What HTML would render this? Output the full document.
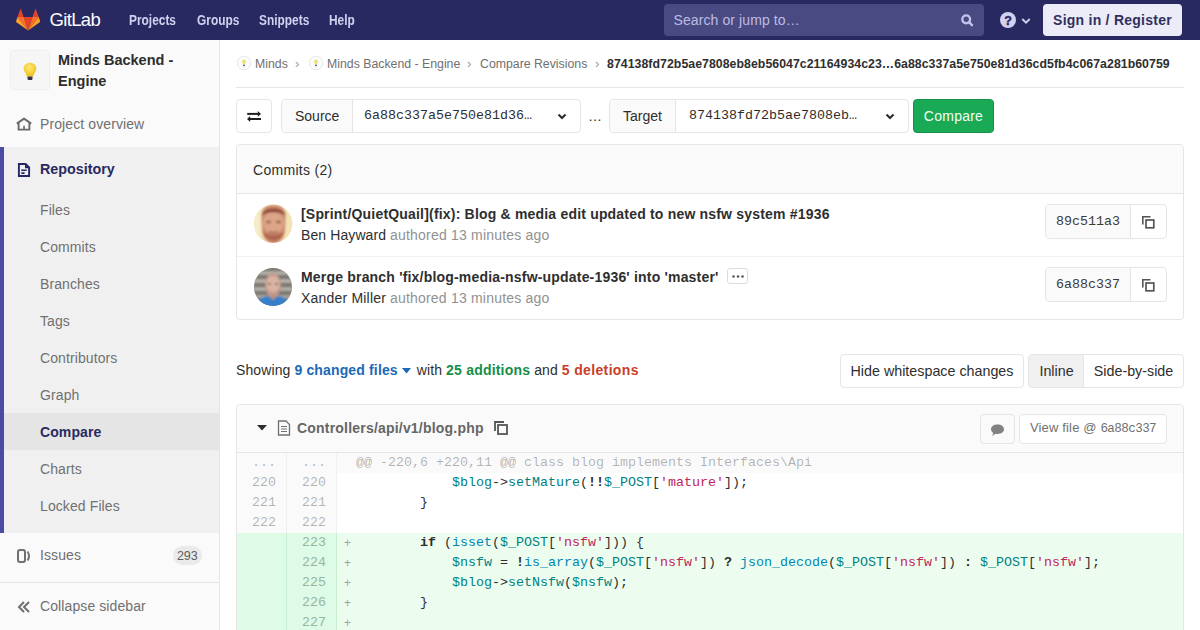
<!DOCTYPE html>
<html><head><meta charset="utf-8">
<style>
*{box-sizing:border-box;margin:0;padding:0}
html,body{width:1200px;height:630px;overflow:hidden;background:#fff}
body{font-family:"Liberation Sans",sans-serif;font-size:14px;color:#2e2e2e;position:relative}
.abs{position:absolute}
.mono{font-family:"Liberation Mono",monospace}
/* header */
#hdr{position:absolute;left:0;top:0;width:1200px;height:40px;background:#292961}
#hdr .nav{position:absolute;top:0;height:40px;line-height:40px;color:#d1d1f0;font-weight:700;font-size:14px;transform:scaleX(0.85);transform-origin:0 0}
#search{position:absolute;left:664px;top:4px;width:320px;height:32px;border-radius:4px;background:#4a4a82}
#search span{position:absolute;left:9.5px;letter-spacing:0.1px;top:0;line-height:32px;color:#bcbce4;font-size:14px}
#signin{position:absolute;left:1043px;top:4px;width:139px;height:32px;border-radius:4px;background:#ececf8;color:#30305f;font-weight:700;font-size:14px;line-height:32px;text-align:center;letter-spacing:0.25px}
/* sidebar */
#side{position:absolute;left:0;top:40px;width:220px;height:590px;background:#fafafa;border-right:1px solid #e5e5e5}
#side .it{position:absolute;left:40px;color:#707070;font-size:14px;line-height:20px;letter-spacing:0.1px}
#repo{position:absolute;left:0;top:107px;width:219px;height:386px;background:#f0f0f0}
#repo .bar{position:absolute;left:0;top:0;width:4px;height:386px;background:#4b4ba3}
#cmpact{position:absolute;left:4px;top:266px;width:215px;height:37px;background:#e5e5e5}
/* content */
.crumb{position:absolute;top:55px;line-height:18px;font-size:12.3px;color:#707070}
.btn{position:absolute;border:1px solid #e5e5e5;border-radius:4px;background:#fff}

.dl{position:absolute;left:0;width:946px;height:20px;white-space:pre;background:#fff}
.dl .n1,.dl .n2{position:absolute;top:0;width:50px;height:20px;text-align:right;padding-right:10px;color:rgba(0,0,0,0.3);background:#fafafa;border-right:1px solid #f0f0f0}
.dl .n1{left:0}.dl .n2{left:50px}
.dl .lc{position:absolute;left:107px;top:-0.5px;color:#a0a0a0;font-family:"Liberation Sans",sans-serif;font-size:12px}
.dl .code{position:absolute;left:119px;top:0;color:#2e2e2e}
.dl.match .code{color:rgba(0,0,0,0.3)}
.dl.match{background:#fafafa}
.dl.new{background:#ecfdf0}
.dl.new .n1,.dl.new .n2{background:#ddfbe6;border-right-color:#c7f0d2;color:#98b5a0}
.dl.match .n1,.dl.match .n2{letter-spacing:0}
.nv,.na{color:#008080}.nb{color:#0086b3}.s{color:#c0245a}.k{font-weight:700;color:#2e2e2e}.o{color:#2e2e2e}.ob{font-weight:700;color:#2e2e2e}.p{color:#2e2e2e}
</style></head><body>

<div id="hdr">
  <svg class="abs" style="left:15.8px;top:8.5px" width="24.2" height="23" viewBox="0 0 25 24" preserveAspectRatio="none">
    <path d="M12.5 22.5 L17.1 8.4 H7.9 Z" fill="#e24329"/>
    <path d="M12.5 22.5 L7.9 8.4 H1.5 Z" fill="#fc6d26"/>
    <path d="M1.5 8.4 L0.1 12.7 C0 13.1 0.1 13.5 0.5 13.8 L12.5 22.5 Z" fill="#fca326"/>
    <path d="M1.5 8.4 H7.9 L5.1 0.3 C5 0 4.6 0 4.5 0.3 Z" fill="#e24329"/>
    <path d="M12.5 22.5 L17.1 8.4 H23.5 Z" fill="#fc6d26"/>
    <path d="M23.5 8.4 L24.9 12.7 C25 13.1 24.9 13.5 24.5 13.8 L12.5 22.5 Z" fill="#fca326"/>
    <path d="M23.5 8.4 H17.1 L19.9 0.3 C20 0 20.4 0 20.5 0.3 Z" fill="#e24329"/>
  </svg>
  <div class="abs" style="left:49.5px;top:-0.5px;line-height:40px;color:#fafaff;font-size:18.5px;letter-spacing:-0.65px">GitLab</div>
  <div class="nav" style="left:129px">Projects</div>
  <div class="nav" style="left:197px">Groups</div>
  <div class="nav" style="left:259px">Snippets</div>
  <div class="nav" style="left:329px">Help</div>
  <div id="search"><span>Search or jump to…</span>
    <svg class="abs" style="left:296px;top:9px" width="14" height="14" viewBox="0 0 14 14"><circle cx="6.2" cy="6.3" r="3.9" fill="none" stroke="#c4c4ea" stroke-width="2.4"/><path d="M9 9.2 L12 12.2" stroke="#c4c4ea" stroke-width="2.4" stroke-linecap="round"/></svg>
  </div>
  <svg class="abs" style="left:1000px;top:12px" width="16" height="16" viewBox="0 0 16 16"><circle cx="8" cy="8" r="8" fill="#d1d1f0"/><text x="8" y="12.8" text-anchor="middle" font-family="Liberation Sans" font-weight="700" font-size="12.5" fill="#292961" stroke="#292961" stroke-width="0.4">?</text></svg>
  <svg class="abs" style="left:1020.5px;top:16.5px" width="10" height="8" viewBox="0 0 10 8"><path d="M1.3 2 L5 5.7 L8.7 2" fill="none" stroke="#d1d1f0" stroke-width="1.9"/></svg>
  <div id="signin">Sign in / Register</div>
</div>

<div id="side">
  <div class="abs" style="left:10px;top:10px;width:40px;height:40px;border-radius:4px;background:#f6f6f6;box-shadow:inset 0 0 0 1px rgba(0,0,0,0.03)"></div>
  <svg class="abs" style="left:22px;top:22px" width="16" height="20" viewBox="0 0 16 20"><defs><radialGradient id="bg1" cx="45%" cy="35%" r="60%"><stop offset="0" stop-color="#ffe97a"/><stop offset="1" stop-color="#f0c420"/></radialGradient></defs><path d="M8 0.8 C4.6 0.8 1.6 3 1.6 6.6 C1.6 9.4 4 11 4.8 14.5 H11.2 C12 11 14.4 9.4 14.4 6.6 C14.4 3 11.4 0.8 8 0.8 Z" fill="url(#bg1)"/><path d="M5.5 14.5 H10.5 V16.8 C10.5 17.6 9.8 18 9 18 H7 C6.2 18 5.5 17.6 5.5 16.8Z" fill="#33334a"/></svg>
  <div class="abs" style="left:58px;top:10px;width:150px;font-weight:700;font-size:14.5px;line-height:21px;color:#2e2e2e">Minds Backend - Engine</div>
  <svg class="abs" style="left:16px;top:76px" width="16" height="16" viewBox="0 0 16 16"><path d="M0.8 7.6 L8 2.6 L15.2 7.6" fill="none" stroke="#6a6a6a" stroke-width="1.9" stroke-linejoin="round"/><path d="M2.6 6.6 V13.6 H13.4 V6.6" fill="none" stroke="#6a6a6a" stroke-width="1.9"/><rect x="7.2" y="9.8" width="1.7" height="4" fill="#6a6a6a"/></svg>
  <div class="it" style="top:74px">Project overview</div>
  <div id="repo"><div class="bar"></div><div id="cmpact"></div>
    <svg class="abs" style="left:17px;top:16px" width="14" height="15" viewBox="0 0 14 15"><path d="M1.9 1 H8.6 L12.1 4.5 V13 H1.9 Z" fill="none" stroke="#25256a" stroke-width="1.9" stroke-linejoin="miter"/><path d="M8 1 V5.3 H12.1 Z" fill="#25256a"/><path d="M4.3 7.2 H9.7 M4.3 10.1 H7.6" stroke="#25256a" stroke-width="1.6"/></svg>
    <div class="abs" style="left:40px;top:12px;line-height:20px;font-weight:700;font-size:14.3px;color:#292961">Repository</div>
    <div class="it" style="top:53px">Files</div>
    <div class="it" style="top:90px">Commits</div>
    <div class="it" style="top:127px">Branches</div>
    <div class="it" style="top:164px">Tags</div>
    <div class="it" style="top:201px">Contributors</div>
    <div class="it" style="top:238px">Graph</div>
    <div class="it" style="top:275px;color:#292961;font-weight:700">Compare</div>
    <div class="it" style="top:312px">Charts</div>
    <div class="it" style="top:349px">Locked Files</div>
  </div>
  <svg class="abs" style="left:17px;top:509px" width="14" height="14" viewBox="0 0 14 14"><rect x="1" y="1" width="7" height="12" rx="2" fill="none" stroke="#707070" stroke-width="2"/><path d="M10.5 2.5 C12.5 5 12.5 9 10.5 11.5" fill="none" stroke="#707070" stroke-width="2"/></svg>
  <div class="it" style="top:505px">Issues</div>
  <div class="abs" style="left:172.5px;top:505.5px;width:29.5px;height:19.5px;border-radius:10px;background:#eaeaea;color:#5e5e5e;font-size:12.5px;line-height:21px;text-align:center;letter-spacing:-0.1px">293</div>
  <div class="abs" style="left:0;top:542px;width:219px;height:1px;background:#e5e5e5"></div>
  <svg class="abs" style="left:17px;top:561px" width="14" height="12" viewBox="0 0 14 12"><path d="M7 1 L2 6 L7 11 M12 1 L7 6 L12 11" fill="none" stroke="#707070" stroke-width="2"/></svg>
  <div class="it" style="top:556px">Collapse sidebar</div>
</div>

<!-- breadcrumbs -->
<svg class="abs" style="left:235.5px;top:55px" width="16" height="16" viewBox="0 0 16 16"><circle cx="8" cy="8" r="6.8" fill="#fbfbfb" stroke="#e8e8e8" stroke-width="1"/><path d="M8 4.6 C6.8 4.6 6 5.5 6 6.6 C6 7.7 6.9 8.2 7 9.4 H9 C9.1 8.2 10 7.7 10 6.6 C10 5.5 9.2 4.6 8 4.6 Z" fill="#efe07a"/><rect x="7.1" y="9.6" width="1.8" height="1.6" fill="#666"/></svg>
<div class="crumb" style="left:255px">Minds</div>
<div class="crumb" style="left:295px;font-size:13px;color:#999">›</div>
<svg class="abs" style="left:307.5px;top:55px" width="16" height="16" viewBox="0 0 16 16"><circle cx="8" cy="8" r="6.8" fill="#fbfbfb" stroke="#e8e8e8" stroke-width="1"/><path d="M8 4.6 C6.8 4.6 6 5.5 6 6.6 C6 7.7 6.9 8.2 7 9.4 H9 C9.1 8.2 10 7.7 10 6.6 C10 5.5 9.2 4.6 8 4.6 Z" fill="#efe07a"/><rect x="7.1" y="9.6" width="1.8" height="1.6" fill="#666"/></svg>
<div class="crumb" style="left:327px">Minds Backend - Engine</div>
<div class="crumb" style="left:467px;font-size:13px;color:#999">›</div>
<div class="crumb" style="left:480px">Compare Revisions</div>
<div class="crumb" style="left:595px;font-size:13px;color:#999">›</div>
<div class="crumb" style="left:607px;font-weight:700;color:#2e2e2e;letter-spacing:0.05px">874138fd72b5ae7808eb8eb56047c21164934c23…6a88c337a5e750e81d36cd5fb4c067a281b60759</div>
<div class="abs" style="left:236px;top:87px;width:948px;height:1px;background:#e5e5e5"></div>


<!-- compare form -->
<div class="btn" style="left:236px;top:99px;width:36px;height:34px"></div>
<svg class="abs" style="left:246px;top:109px" width="16" height="14" viewBox="0 0 16 14"><path d="M1.2 4.9 H12.5" stroke="#1f1f1f" stroke-width="2"/><path d="M11.8 2 L15 4.9 L11.8 7.8Z" fill="#1f1f1f"/><path d="M3.5 10 H15" stroke="#1f1f1f" stroke-width="2"/><path d="M4.2 7.1 L1 10 L4.2 12.9Z" fill="#1f1f1f"/></svg>

<div class="btn" style="left:281px;top:99px;width:300px;height:34px;overflow:hidden">
  <div class="abs" style="left:0;top:0;width:71px;height:32px;background:#fafafa;border-right:1px solid #e5e5e5"></div>
  <div class="abs" style="left:13px;top:0;line-height:32px;color:#2e2e2e">Source</div>
  <div class="abs mono" style="left:82px;top:0;line-height:32px;font-size:13.33px;color:#2e2e2e">6a88c337a5e750e81d36…</div>
  <svg class="abs" style="left:275px;top:13px" width="10" height="8" viewBox="0 0 10 8"><path d="M1.5 1.5 L5 5 L8.5 1.5" fill="none" stroke="#2e2e2e" stroke-width="2.2"/></svg>
</div>
<div class="abs" style="left:588px;top:99px;line-height:34px;color:#2e2e2e">…</div>
<div class="btn" style="left:609px;top:99px;width:300px;height:34px;overflow:hidden">
  <div class="abs" style="left:0;top:0;width:66px;height:32px;background:#fafafa;border-right:1px solid #e5e5e5"></div>
  <div class="abs" style="left:13px;top:0;line-height:32px;color:#2e2e2e">Target</div>
  <div class="abs mono" style="left:79px;top:0;line-height:32px;font-size:13.33px;color:#2e2e2e">874138fd72b5ae7808eb…</div>
  <svg class="abs" style="left:275px;top:13px" width="10" height="8" viewBox="0 0 10 8"><path d="M1.5 1.5 L5 5 L8.5 1.5" fill="none" stroke="#2e2e2e" stroke-width="2.2"/></svg>
</div>
<div class="abs" style="left:913px;top:99px;width:81px;height:34px;border-radius:4px;background:#1aaa55;border:1px solid #168f48;color:#f0fff4;line-height:32px;text-align:center;font-size:14px;letter-spacing:0.25px">Compare</div>

<!-- commits box -->
<div class="abs" style="left:236px;top:144px;width:948px;height:176px;border:1px solid #e5e5e5;border-radius:4px;overflow:hidden">
  <div class="abs" style="left:0;top:0;width:946px;height:49px;background:#fafafa;border-bottom:1px solid #e5e5e5"></div>
  <div class="abs" style="left:16px;top:15px;line-height:20px;color:#2e2e2e;letter-spacing:0.3px">Commits (2)</div>
  <div class="abs" style="left:0;top:111px;width:946px;height:1px;background:#f0f0f0"></div>
</div>

<!-- commit 1 -->
<svg class="abs" style="left:253px;top:204px" width="40" height="40" viewBox="0 0 40 40">
  <defs><clipPath id="c1"><circle cx="20.2" cy="19.8" r="19.2"/></clipPath>
  <filter id="bl1" x="-20%" y="-20%" width="140%" height="140%"><feGaussianBlur stdDeviation="0.8"/></filter></defs>
  <g clip-path="url(#c1)"><rect width="40" height="40" fill="#f2e2b4"/>
  <g filter="url(#bl1)">
   <rect x="0" y="0" width="7" height="40" fill="#f7ecc8"/>
   <path d="M8.5 14 C8.5 4 13 1 20.5 1 C28 1 32.5 4 32.5 14 L32 26 C31 35 26 39.5 20.5 39.5 C15 39.5 10 35 9 26 Z" fill="#cd8a6e"/>
   <ellipse cx="20.5" cy="19" rx="10.5" ry="11" fill="#dca588"/>
   <path d="M8.5 12 C9 2 32 2 32.5 12 C29 7 12 7 8.5 12Z" fill="#8e4a3a"/>
   <path d="M10 27 C12 40 29 40 31 27 C28 32 13 32 10 27Z" fill="#b06650"/>
   <ellipse cx="15.5" cy="18" rx="2.5" ry="1.2" fill="#8e5444"/>
   <ellipse cx="25.5" cy="18" rx="2.5" ry="1.2" fill="#8e5444"/>
   <path d="M16 27.5 C18 29 23 29 25 27.5" stroke="#94503e" stroke-width="1.2" fill="none"/>
  </g></g>
</svg>
<div class="abs" style="left:301px;top:204px;line-height:20px;font-weight:700;letter-spacing:0.19px">[Sprint/QuietQuail](fix): Blog &amp; media edit updated to new nsfw system #1936</div>
<div class="abs" style="left:301px;top:225px;line-height:20px"><span style="color:#2e2e2e;letter-spacing:0.1px">Ben Hayward</span> <span style="color:#919191;letter-spacing:0.2px">authored 13 minutes ago</span></div>

<!-- commit 2 -->
<svg class="abs" style="left:253px;top:267px" width="40" height="40" viewBox="0 0 40 40">
  <defs><clipPath id="c2"><circle cx="20" cy="20" r="19"/></clipPath>
  <filter id="bl2" x="-20%" y="-20%" width="140%" height="140%"><feGaussianBlur stdDeviation="0.8"/></filter></defs>
  <g clip-path="url(#c2)"><rect width="40" height="40" fill="#7c7872"/>
  <g filter="url(#bl2)">
   <rect y="4" width="40" height="4" fill="#b2aea6"/><rect y="12" width="40" height="4" fill="#b4b0a8"/><rect y="20" width="40" height="4" fill="#b2aea6"/><rect y="28" width="40" height="3" fill="#aaa69e"/>
   <ellipse cx="20" cy="18" rx="8" ry="12" fill="#c49a8a"/>
   <ellipse cx="20" cy="17" rx="6.5" ry="8" fill="#d9b4a4"/>
   <ellipse cx="16.5" cy="17" rx="1.8" ry="1" fill="#8e6a5e"/>
   <ellipse cx="23.5" cy="17" rx="1.8" ry="1" fill="#8e6a5e"/>
   <rect x="16" y="28" width="8" height="5" fill="#c89070"/>
   <path d="M0 40 C3 32 12 29 16 29 L20 33 L24 29 C28 29 37 32 40 40Z" fill="#3580c8"/>
  </g></g>
</svg>
<div class="abs" style="left:301px;top:267px;line-height:20px;font-weight:700;letter-spacing:0.19px">Merge branch 'fix/blog-media-nsfw-update-1936' into 'master'</div>
<div class="abs" style="left:727px;top:268px;width:21px;height:16px;border:1px solid #dcdcdc;border-radius:3px;background:#fff"></div>
<svg class="abs" style="left:730px;top:273.5px" width="15" height="5" viewBox="0 0 15 5"><circle cx="3.5" cy="2.4" r="1.25" fill="#555"/><circle cx="8" cy="2.4" r="1.25" fill="#555"/><circle cx="12.5" cy="2.4" r="1.25" fill="#555"/></svg>
<div class="abs" style="left:301px;top:288px;line-height:20px"><span style="color:#2e2e2e;letter-spacing:0.2px">Xander Miller</span> <span style="color:#919191;letter-spacing:0.2px">authored 13 minutes ago</span></div>

<!-- sha buttons -->
<div class="btn" style="left:1045px;top:204px;width:122px;height:35px;overflow:hidden">
  <div class="abs" style="left:0;top:0;width:85px;height:33px;background:#fafafa;border-right:1px solid #e5e5e5"></div>
  <div class="abs mono" style="left:10px;top:0;line-height:33px;font-size:13.33px;color:#3a3a3a">89c511a3</div><svg class="abs" style="left:95px;top:9.5px" width="14" height="14" viewBox="0 0 14 14"><path d="M1.8 9.5 V1.8 H9.5" fill="none" stroke="#555" stroke-width="1.6"/><rect x="5" y="5" width="7.8" height="7.8" fill="none" stroke="#555" stroke-width="1.7"/></svg>
</div>
<div class="btn" style="left:1045px;top:267px;width:122px;height:35px;overflow:hidden">
  <div class="abs" style="left:0;top:0;width:85px;height:33px;background:#fafafa;border-right:1px solid #e5e5e5"></div>
  <div class="abs mono" style="left:10px;top:0;line-height:33px;font-size:13.33px;color:#3a3a3a">6a88c337</div><svg class="abs" style="left:95px;top:9.5px" width="14" height="14" viewBox="0 0 14 14"><path d="M1.8 9.5 V1.8 H9.5" fill="none" stroke="#555" stroke-width="1.6"/><rect x="5" y="5" width="7.8" height="7.8" fill="none" stroke="#555" stroke-width="1.7"/></svg>
</div>


<!-- showing row -->
<div class="abs" style="left:236px;top:360px;line-height:20px;white-space:nowrap;letter-spacing:0.1px">Showing <b style="color:#1b69b6;letter-spacing:0.15px">9 changed files</b><svg style="margin:0 2px 0 4px;vertical-align:1px" width="9" height="6" viewBox="0 0 9 6"><path d="M0 0 H9 L4.5 5.5Z" fill="#1b69b6"/></svg> with <b style="color:#168f48;letter-spacing:0.2px">25 additions</b> and <b style="color:#c9402a;letter-spacing:0.35px">5 deletions</b></div>
<div class="btn" style="left:840px;top:354px;width:184px;height:34px;line-height:32px;text-align:center;color:#2e2e2e;font-size:14.3px">Hide whitespace changes</div>
<div class="btn" style="left:1028px;top:354px;width:156px;height:34px;overflow:hidden">
  <div class="abs" style="left:0;top:0;width:55px;height:32px;background:#f0f0f0;border-right:1px solid #e5e5e5"></div>
  <div class="abs" style="left:0;top:0;width:55px;line-height:32px;text-align:center;font-size:14.3px">Inline</div>
  <div class="abs" style="left:55px;top:0;width:99px;line-height:32px;text-align:center;font-size:14.3px">Side-by-side</div>
</div>

<!-- file -->
<div class="abs" style="left:236px;top:404px;width:948px;height:240px;border:1px solid #e5e5e5;border-radius:4px 4px 0 0;overflow:hidden">
  <div class="abs" style="left:0;top:0;width:946px;height:48px;background:#fafafa;border-bottom:1px solid #e5e5e5"></div>
</div>
<svg class="abs" style="left:257px;top:425px" width="10" height="6" viewBox="0 0 10 6"><path d="M0 0 H10 L5 5.5Z" fill="#2e2e2e"/></svg>
<svg class="abs" style="left:277px;top:420px" width="14" height="16" viewBox="0 0 14 16"><path d="M1.5 1 H9 L12.5 4.5 V15 H1.5 Z" fill="none" stroke="#707070" stroke-width="1.3"/><path d="M4 6.5 H10 M4 9 H10 M4 11.5 H10" stroke="#707070" stroke-width="1.1"/></svg>
<div class="abs" style="left:297px;top:418px;line-height:20px;font-weight:700;color:#666;letter-spacing:0.2px">Controllers/api/v1/blog.php</div>
<svg class="abs" style="left:493px;top:420px" width="16" height="16" viewBox="0 0 16 16"><path d="M2 11 V2 H11" fill="none" stroke="#555" stroke-width="1.8"/><rect x="5" y="5" width="9" height="9" fill="none" stroke="#555" stroke-width="1.8"/></svg>
<div class="btn" style="left:980px;top:414px;width:35px;height:30px;background:#fafafa"></div>
<svg class="abs" style="left:990px;top:422.5px" width="15" height="14" viewBox="0 0 15 14"><path d="M7.5 1.5 C11.5 1.5 14 3.6 14 6.3 C14 9 11.5 11 7.5 11 C6.8 11 6.2 11 5.6 10.8 L2 13 L3.3 10 C1.8 9.1 1 7.8 1 6.3 C1 3.6 3.5 1.5 7.5 1.5Z" fill="#828282"/></svg>
<div class="btn" style="left:1019px;top:414px;width:148px;height:30px;line-height:26px;color:#707070;font-size:13px;padding-left:10px;white-space:nowrap;letter-spacing:0.15px">View file @ <span class="mono" style="font-size:12.6px;letter-spacing:-0.6px">6a88c337</span></div>

<!-- diff -->
<div class="abs mono" style="left:237px;top:453px;width:946px;height:177px;overflow:hidden;font-size:13.33px;line-height:20px">
<div class="dl match" style="top:0px"><div class="n1">...</div><div class="n2">...</div><div class="lc"></div><div class="code">@@ -220,6 +220,11 @@ class blog implements Interfaces\Api</div></div>
<div class="dl ctx" style="top:20px"><div class="n1">220</div><div class="n2">220</div><div class="lc"></div><div class="code">            <span class="nv">$blog</span><span class="o">-&gt;</span><span class="na">setMature</span><span class="p">(</span><span class="ob">!!</span><span class="nv">$_POST</span><span class="p">[</span><span class="s">'mature'</span><span class="p">]);</span></div></div>
<div class="dl ctx" style="top:40px"><div class="n1">221</div><div class="n2">221</div><div class="lc"></div><div class="code">        <span class="p">}</span></div></div>
<div class="dl ctx" style="top:60px"><div class="n1">222</div><div class="n2">222</div><div class="lc"></div><div class="code"></div></div>
<div class="dl new" style="top:80px"><div class="n1"></div><div class="n2">223</div><div class="lc">+</div><div class="code">        <span class="k">if</span> <span class="p">(</span><span class="nb">isset</span><span class="p">(</span><span class="nv">$_POST</span><span class="p">[</span><span class="s">'nsfw'</span><span class="p">]))</span> <span class="p">{</span></div></div>
<div class="dl new" style="top:100px"><div class="n1"></div><div class="n2">224</div><div class="lc">+</div><div class="code">            <span class="nv">$nsfw</span> <span class="o">=</span> <span class="ob">!</span><span class="nb">is_array</span><span class="p">(</span><span class="nv">$_POST</span><span class="p">[</span><span class="s">'nsfw'</span><span class="p">])</span> <span class="ob">?</span> <span class="nb">json_decode</span><span class="p">(</span><span class="nv">$_POST</span><span class="p">[</span><span class="s">'nsfw'</span><span class="p">])</span> <span class="ob">:</span> <span class="nv">$_POST</span><span class="p">[</span><span class="s">'nsfw'</span><span class="p">];</span></div></div>
<div class="dl new" style="top:120px"><div class="n1"></div><div class="n2">225</div><div class="lc">+</div><div class="code">            <span class="nv">$blog</span><span class="o">-&gt;</span><span class="na">setNsfw</span><span class="p">(</span><span class="nv">$nsfw</span><span class="p">);</span></div></div>
<div class="dl new" style="top:140px"><div class="n1"></div><div class="n2">226</div><div class="lc">+</div><div class="code">        <span class="p">}</span></div></div>
<div class="dl new" style="top:160px"><div class="n1"></div><div class="n2">227</div><div class="lc">+</div><div class="code"></div></div>
</div>

</body></html>
